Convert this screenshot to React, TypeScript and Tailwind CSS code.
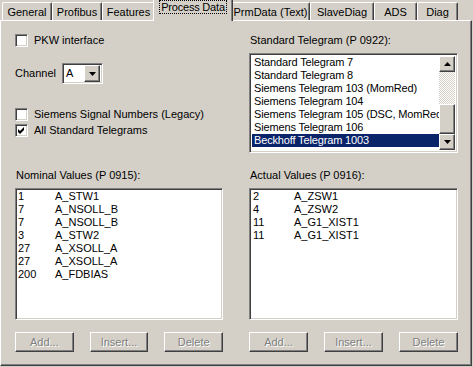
import type { ReactNode } from "react";

const tabs = [
  { label: "General", w: "w-[50px]" },
  { label: "Profibus", w: "w-[50px]" },
  { label: "Features", w: "w-[53px]" },
  { label: "Process Data", w: "w-[76px]", active: true },
  { label: "PrmData (Text)", w: "w-[79px]" },
  { label: "SlaveDiag", w: "w-[64px]" },
  { label: "ADS", w: "w-[43px]" },
  { label: "Diag", w: "w-[41px]" },
];

const telegrams = [
  "Standard Telegram 7",
  "Standard Telegram 8",
  "Siemens Telegram 103 (MomRed)",
  "Siemens Telegram 104",
  "Siemens Telegram 105 (DSC, MomRed)",
  "Siemens Telegram 106",
  "Beckhoff Telegram 1003",
];

const nominal = [
  ["1", "A_STW1"],
  ["7", "A_NSOLL_B"],
  ["7", "A_NSOLL_B"],
  ["3", "A_STW2"],
  ["27", "A_XSOLL_A"],
  ["27", "A_XSOLL_A"],
  ["200", "A_FDBIAS"],
];

const actual = [
  ["2", "A_ZSW1"],
  ["4", "A_ZSW2"],
  ["11", "A_G1_XIST1"],
  ["11", "A_G1_XIST1"],
];

// sunken 3d edge used by fields, lists and checkboxes
const sunken =
  "border border-t-[#808080] border-l-[#808080] border-r-white border-b-white shadow-[inset_1px_1px_#404040,inset_-1px_-1px_#d4d0c8]";
const raised =
  "border border-t-white border-l-white border-r-[#404040] border-b-[#404040] shadow-[inset_-1px_-1px_#808080]";

function Checkbox({ checked, children }: { checked?: boolean; children: ReactNode }) {
  return (
    <div className="flex h-[13px] items-center gap-[6px]">
      <span className={`flex h-[13px] w-[13px] items-center justify-center bg-white ${sunken}`}>
        {checked && (
          <svg width="7" height="7" viewBox="0 0 7 7">
            <path d="M0 2 L2 4 L6 0 L6 3 L2 7 L0 5 Z" fill="#000" />
          </svg>
        )}
      </span>
      <span className="leading-[13px]">{children}</span>
    </div>
  );
}

function Arrow({ up }: { up?: boolean }) {
  return (
    <svg width="7" height="4" viewBox="0 0 7 4">
      <path d={up ? "M3.5 0 L7 4 L0 4 Z" : "M0 0 L7 0 L3.5 4 Z"} fill="#000" />
    </svg>
  );
}

function Buttons() {
  return (
    <div className="mt-[12px] flex gap-[16px]">
      {["Add...", "Insert...", "Delete"].map((b) => (
        <div
          key={b}
          className={`flex h-[20px] w-[59px] items-center justify-center bg-[#d4d0c8] text-[#808080] [text-shadow:1px_1px_#fff] ${raised}`}
        >
          {b}
        </div>
      ))}
    </div>
  );
}

function ValueList({ rows, pad, col }: { rows: string[][]; pad: string; col: string }) {
  return (
    <div className={`h-[132px] bg-white ${sunken} p-[1px] ${pad}`}>
      {rows.map(([n, name], i) => (
        <div key={i} className="flex h-[13px] items-center leading-[13px]">
          <span className={col}>{n}</span>
          <span>{name}</span>
        </div>
      ))}
    </div>
  );
}

export default function App() {
  return (
    <div
      className="h-[367px] w-[473px] overflow-hidden bg-[#d4d0c8] text-[11px] text-black"
      style={{ fontFamily: '"Liberation Sans", Arial, sans-serif' }}
    >
      {/* tab strip */}
      <div className="flex h-[20px] items-end pl-[2px]">
        {tabs.map((t) =>
          t.active ? (
            <div
              key={t.label}
              className={`relative z-10 -mx-[2px] -mb-[1px] flex h-[21px] ${t.w} box-content shrink-0 items-start justify-center rounded-t-[2px] border-l border-t border-r border-l-white border-t-white border-r-[#404040] bg-[#d4d0c8] px-[1px] pt-[2px] shadow-[inset_-1px_0_#808080]`}
            >
              <span className="shrink-0 whitespace-nowrap border border-dotted border-black px-[1px] leading-[12px] tracking-[-0.2px]">
                {t.label}
              </span>
            </div>
          ) : (
            <div
              key={t.label}
              className={`flex h-[18px] ${t.w} shrink-0 items-center justify-center whitespace-nowrap rounded-t-[2px] border-l border-t border-r border-l-white border-t-white border-r-[#404040] pt-[1px] shadow-[inset_-1px_0_#808080]`}
            >
              {t.label}
            </div>
          ),
        )}
      </div>

      {/* page */}
      <div className="h-[346px] w-[472px] border border-t-white border-l-white border-r-[#404040] border-b-[#404040] pl-[14px] shadow-[inset_-1px_-1px_#808080]">
        <div className="grid h-[148px] grid-cols-[208px_209px] gap-x-[26px] pt-[13px]">
          <div className="flex flex-col">
            <Checkbox>PKW interface</Checkbox>
            <div className="mt-[16px] flex h-[21px] items-center">
              <span className="w-[47px]">Channel</span>
              <div className={`flex h-[21px] w-[41px] items-center bg-white p-[2px] ${sunken}`}>
                <span className="flex-1 pl-[1px]">A</span>
                <div className={`flex h-[17px] w-[16px] items-center justify-center bg-[#d4d0c8] ${raised}`}>
                  <Arrow />
                </div>
              </div>
            </div>
            <div className="mt-[24px]">
              <Checkbox>Siemens Signal Numbers (Legacy)</Checkbox>
            </div>
            <div className="mt-[3px]">
              <Checkbox checked>All Standard Telegrams</Checkbox>
            </div>
          </div>

          <div className="flex flex-col">
            <div className="h-[13px] pl-[1px] leading-[13px]">Standard Telegram (P 0922):</div>
            <div className={`mt-[6px] flex h-[100px] bg-white p-[2px] ${sunken}`}>
              <div className="flex-1 overflow-hidden">
                {telegrams.map((t, i) => (
                  <div
                    key={t}
                    className={`h-[13px] whitespace-nowrap pl-[2px] leading-[13px] tracking-[-0.15px] ${
                      i === telegrams.length - 1 ? "bg-[#0a246a] text-white" : ""
                    }`}
                  >
                    {t}
                  </div>
                ))}
              </div>
              <div className="flex w-[16px] flex-col">
                <div className={`flex h-[16px] items-center justify-center bg-[#d4d0c8] ${raised}`}>
                  <Arrow up />
                </div>
                <div className="flex-1 bg-[repeating-conic-gradient(#d4d0c8_0_25%,#ffffff_0_50%)] bg-[length:2px_2px]" />
                <div className={`h-[30px] bg-[#d4d0c8] ${raised}`} />
                <div className={`flex h-[16px] items-center justify-center bg-[#d4d0c8] ${raised}`}>
                  <Arrow />
                </div>
              </div>
            </div>
          </div>
        </div>

        <div className="grid grid-cols-[208px_209px] gap-x-[26px]">
          <div className="flex flex-col">
            <div className="h-[13px] pl-[1px] leading-[13px]">Nominal Values (P 0915):</div>
            <div className="mt-[6px]">
              <ValueList rows={nominal} pad="pl-[2px]" col="w-[37px]" />
            </div>
            <Buttons />
          </div>
          <div className="flex flex-col">
            <div className="h-[13px] pl-[1px] leading-[13px]">Actual Values (P 0916):</div>
            <div className="mt-[6px]">
              <ValueList rows={actual} pad="pl-[3px]" col="w-[41px]" />
            </div>
            <Buttons />
          </div>
        </div>
      </div>
    </div>
  );
}
